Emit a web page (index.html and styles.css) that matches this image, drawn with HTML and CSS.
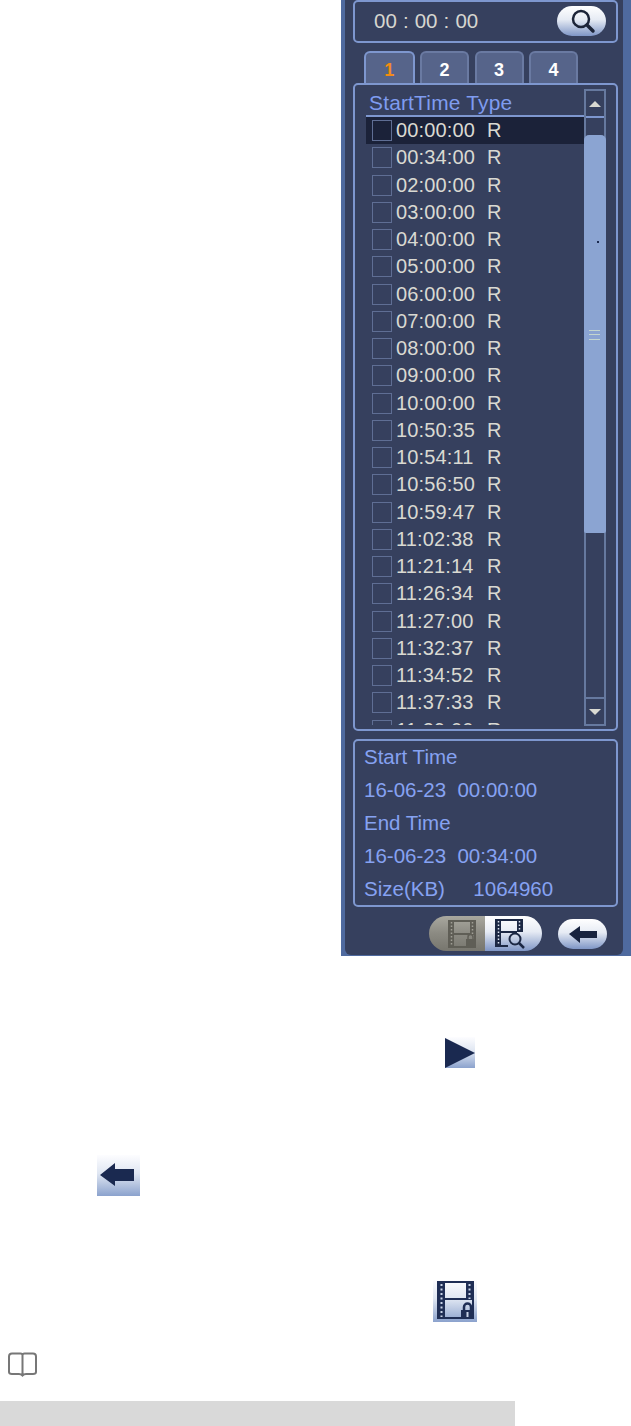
FILE: index.html
```html
<!DOCTYPE html>
<html lang="en">
<head>
<meta charset="UTF-8">
<title>Record Search</title>
<link rel="stylesheet" href="styles.css">
</head>
<body>
<div class="panel">
  <div class="panel-inner">
    <div class="time-box">
      <span class="time-value">00 : 00 : 00</span>
      <span class="pill search-btn">
        <svg width="30" height="28" viewBox="0 0 30 28"><circle cx="14" cy="12" r="8" fill="none" stroke="#1c2438" stroke-width="2.500"/><path d="M20 18l6 6" stroke="#1c2438" stroke-width="3.500" stroke-linecap="round"/></svg>
      </span>
    </div>

    <div class="tabs">
      <div class="tab active">1</div>
      <div class="tab">2</div>
      <div class="tab">3</div>
      <div class="tab">4</div>
    </div>

    <div class="list-box">
      <div class="list-main">
        <div class="list-head">StartTime Type</div>
        <div class="list-rows">
          <div class="row selected"><span class="check"></span><span class="row-time">00:00:00</span><span>R</span></div>
          <div class="row"><span class="check"></span><span class="row-time">00:34:00</span><span>R</span></div>
          <div class="row"><span class="check"></span><span class="row-time">02:00:00</span><span>R</span></div>
          <div class="row"><span class="check"></span><span class="row-time">03:00:00</span><span>R</span></div>
          <div class="row"><span class="check"></span><span class="row-time">04:00:00</span><span>R</span></div>
          <div class="row"><span class="check"></span><span class="row-time">05:00:00</span><span>R</span></div>
          <div class="row"><span class="check"></span><span class="row-time">06:00:00</span><span>R</span></div>
          <div class="row"><span class="check"></span><span class="row-time">07:00:00</span><span>R</span></div>
          <div class="row"><span class="check"></span><span class="row-time">08:00:00</span><span>R</span></div>
          <div class="row"><span class="check"></span><span class="row-time">09:00:00</span><span>R</span></div>
          <div class="row"><span class="check"></span><span class="row-time">10:00:00</span><span>R</span></div>
          <div class="row"><span class="check"></span><span class="row-time">10:50:35</span><span>R</span></div>
          <div class="row"><span class="check"></span><span class="row-time">10:54:11</span><span>R</span></div>
          <div class="row"><span class="check"></span><span class="row-time">10:56:50</span><span>R</span></div>
          <div class="row"><span class="check"></span><span class="row-time">10:59:47</span><span>R</span></div>
          <div class="row"><span class="check"></span><span class="row-time">11:02:38</span><span>R</span></div>
          <div class="row"><span class="check"></span><span class="row-time">11:21:14</span><span>R</span></div>
          <div class="row"><span class="check"></span><span class="row-time">11:26:34</span><span>R</span></div>
          <div class="row"><span class="check"></span><span class="row-time">11:27:00</span><span>R</span></div>
          <div class="row"><span class="check"></span><span class="row-time">11:32:37</span><span>R</span></div>
          <div class="row"><span class="check"></span><span class="row-time">11:34:52</span><span>R</span></div>
          <div class="row"><span class="check"></span><span class="row-time">11:37:33</span><span>R</span></div>
          <div class="row"><span class="check"></span><span class="row-time">11:39:00</span><span>R</span></div>
        </div>
      </div>
      <div class="scrollbar">
        <div class="scroll-btn up"><span class="arrow-up"></span></div>
        <div class="scroll-track">
          <div class="scroll-thumb">
            <span class="thumb-dot"></span>
            <span class="thumb-grip"></span>
          </div>
        </div>
        <div class="scroll-btn down"><span class="arrow-down"></span></div>
      </div>
    </div>

    <div class="info-box">
      <div>Start Time</div>
      <div class="pre">16-06-23  00:00:00</div>
      <div>End Time</div>
      <div class="pre">16-06-23  00:34:00</div>
      <div class="pre">Size(KB)     1064960</div>
    </div>

    <div class="actions">
      <div class="toggle">
        <span class="toggle-half off">
          <svg width="30" height="28" viewBox="0 0 30 28">
            <path d="M1 1h26v26H1z" fill="none" stroke="#5f5e56" stroke-width="2"/>
            <path d="M1 1h5v26H1zM22 1h5v14h-5zM6 13h16v2H6z" fill="#5f5e56"/>
            <path d="M3.500 2v24M24.500 2v12" stroke="#a09f96" stroke-width="1.500" stroke-dasharray="1.500 2"/>
            <rect x="18" y="19" width="9" height="8" fill="#5f5e56"/>
            <path d="M20 19v-2a2.500 2.500 0 0 1 5 0v2" fill="none" stroke="#5f5e56" stroke-width="1.500"/>
          </svg>
        </span>
        <span class="toggle-half on">
          <svg width="30" height="30" viewBox="0 0 30 30">
            <path d="M13 27H1V1h26v12" fill="none" stroke="#1c2844" stroke-width="2"/>
            <path d="M1 1h5v26H1zM22 1h5v12h-5zM6 12h16v2H6z" fill="#1c2844"/>
            <path d="M3.500 2v24M24.500 2v10" stroke="#dfe6f2" stroke-width="1.500" stroke-dasharray="1.500 2"/>
            <circle cx="20" cy="20" r="5.500" fill="none" stroke="#1c2844" stroke-width="2"/>
            <path d="M24 24l5 5" stroke="#1c2844" stroke-width="2.500"/>
          </svg>
        </span>
      </div>
      <span class="pill back-btn">
        <svg width="32" height="18" viewBox="0 0 32 18"><path d="M2 9l11-8v5h17v7H13v5z" fill="#18233f"/></svg>
      </span>
    </div>
  </div>
</div>

<div class="doc">
  <svg class="doc-icon play-icon" width="30" height="31" viewBox="0 0 30 31"><path d="M0 1l30 15L0 31z" fill="#1a2950"/></svg>
  <svg class="doc-icon back-icon" width="43" height="41" viewBox="0 0 43 41"><path d="M3 20L18 8v6h19v12H18v5z" fill="#1a2950"/></svg>
  <svg class="doc-icon film-icon" width="44" height="42" viewBox="0 0 44 42">
    <path d="M5 2h35v36H5z" fill="none" stroke="#1f2e55" stroke-width="2"/>
    <path d="M5 2h7v36H5zM33 2h7v18h-7zM12 18h21v2H12z" fill="#1f2e55"/>
    <path d="M8.500 4v33M36.500 4v15" stroke="#c9d4e8" stroke-width="2" stroke-dasharray="2 2.500"/>
    <rect x="28" y="30" width="13" height="9" fill="#1f2e55"/>
    <path d="M31 30v-3a3.500 3.500 0 0 1 7 0v3" fill="none" stroke="#1f2e55" stroke-width="2.500"/>
    <rect x="33.500" y="32" width="2" height="5" fill="#c9d4e8"/>
  </svg>
  <svg class="doc-icon book-icon" width="31" height="25" viewBox="0 0 31 25"><path d="M15.500 3q0-1.500-2-1.500H5q-3 0-3 3V20q0 2 3 2h7q2 0 3.500 1.500Q17 22 19 22h7q3 0 3-2V4.500q0-3-3-3h-8.500q-2 0-2 1.500v19" fill="none" stroke="#777" stroke-width="2"/></svg>
  <div class="note-bar"></div>
</div>
</body>
</html>
```

FILE: styles.css
```css
body {
  margin: 0;
  background-color: #fff;
  font-family: "Liberation Sans", Arial, sans-serif;
}

.panel {
  margin-left: 341px;
  width: 290px;
  height: 956px;
  background-color: #4f6a9f;
}

.panel-inner {
  box-sizing: border-box;
  width: 278px;
  height: 955px;
  margin-left: 4px;
  padding: 0 5px 0 8px;
  background-color: #36405e;
  border-radius: 0 0 6px 6px;
}

.time-box {
  box-sizing: border-box;
  height: 43px;
  padding: 0 10px 2px 19px;
  display: flex;
  justify-content: space-between;
  align-items: center;
  border: 2px solid #7e97cf;
  border-radius: 5px;
}

.time-value {
  font-size: 20.500px;
  word-spacing: 0.400px;
  color: #d6d6d0;
}

.pill {
  display: flex;
  justify-content: center;
  align-items: center;
  width: 49px;
  height: 30px;
  border-radius: 15px;
  background: linear-gradient(#fff, #e6ebf4 45%, #7f96c6);
}

.tabs {
  display: flex;
  gap: 5.500px;
  height: 32px;
  margin-top: 8px;
  padding-left: 11px;
}

.tab {
  box-sizing: border-box;
  width: 49px;
  height: 32px;
  padding-top: 7px;
  border: 2px solid #6a7aa2;
  border-bottom: none;
  border-radius: 6px 6px 0 0;
  background-color: #56648a;
  color: #fff;
  font-size: 18px;
  font-weight: bold;
  text-align: center;
}

.tab.active {
  width: 50.500px;
  border-color: #7e97cf;
  color: #f28c14;
}

.list-box {
  box-sizing: border-box;
  display: flex;
  height: 648px;
  padding: 4px 10px 4px 11px;
  border: 2px solid #7e97cf;
  border-radius: 5px;
}

.list-main {
  width: 219px;
  height: 636px;
  overflow: hidden;
}

.list-head {
  box-sizing: border-box;
  height: 28px;
  padding-left: 3px;
  border-bottom: 2px solid #7e97cf;
  color: #7f9cf0;
  font-size: 20.900px;
  letter-spacing: 0.200px;
  line-height: 28px;
}

.row {
  display: flex;
  align-items: center;
  height: 27.250px;
  padding-left: 6px;
  color: #d9d9d2;
  font-size: 20px;
}

.row.selected {
  background-color: #1b2239;
}

.check {
  box-sizing: border-box;
  width: 20px;
  height: 21px;
  margin-right: 4px;
  border: 1px solid #5f6e94;
}

.row-time {
  width: 91px;
  letter-spacing: 0.150px;
}

.scrollbar {
  box-sizing: border-box;
  width: 22px;
  height: 637px;
  display: flex;
  flex-direction: column;
  border: 2px solid #66799f;
}

.scroll-btn {
  box-sizing: border-box;
  height: 27px;
  display: flex;
  justify-content: center;
  align-items: center;
}

.scroll-btn.up {
  border-bottom: 2px solid #7e97cf;
}

.scroll-btn.down {
  border-top: 2px solid #66799f;
}

.arrow-up {
  border: 6px solid transparent;
  border-top: none;
  border-bottom-color: #d9d9d2;
}

.arrow-down {
  border: 6px solid transparent;
  border-bottom: none;
  border-top-color: #d9d9d2;
}

.scroll-track {
  flex: 1;
  padding-top: 17px;
}

.scroll-thumb {
  position: relative;
  height: 398px;
  margin: 0 -2px;
  background-color: #8ba4d2;
  border-radius: 5px 5px 2px 2px;
}

.thumb-dot {
  position: absolute;
  top: 106px;
  left: 13px;
  width: 2px;
  height: 2px;
  background-color: #1b2a50;
}

.thumb-grip {
  position: absolute;
  top: 195px;
  left: 5px;
  width: 11px;
  height: 8px;
  border-top: 1px solid #c4d6cf;
  border-bottom: 1px solid #c4d6cf;
  background: linear-gradient(transparent 3px, #c4d6cf 3px, #c4d6cf 4px, transparent 4px);
}

.info-box {
  box-sizing: border-box;
  height: 168px;
  margin-top: 8px;
  padding: 0 0 0 9px;
  border: 2px solid #7e97cf;
  border-radius: 5px;
  color: #86a2f2;
  font-size: 20.500px;
  line-height: 33px;
}

.info-box div:first-child {
  margin-top: -1px;
}

.pre {
  white-space: pre;
}

.actions {
  display: flex;
  align-items: center;
  gap: 16px;
  height: 35px;
  margin-top: 9px;
  padding-left: 76px;
}

.toggle {
  display: flex;
  width: 113px;
  height: 35px;
  border-radius: 18px;
  overflow: hidden;
}

.toggle-half {
  width: 56px;
  display: flex;
  justify-content: flex-end;
  align-items: center;
  padding-right: 7px;
  box-sizing: border-box;
  background: linear-gradient(#a9a89f, #8b8a82 50%, #77766e);
}

.toggle-half.on {
  width: 57px;
  justify-content: flex-start;
  padding-left: 10px;
  padding-right: 0;
  background: linear-gradient(#fff, #e6ebf4 45%, #7f96c6);
}

.doc {
  display: flex;
  flex-direction: column;
  align-items: flex-start;
}

.doc-icon {
  display: block;
  background: linear-gradient(#fdfdff, #dfe6f2 45%, #8ba2cd);
}

.play-icon {
  margin: 81px 0 0 445px;
}

.back-icon {
  margin: 87px 0 0 97px;
}

.film-icon {
  margin: 84px 0 0 433px;
}

.book-icon {
  margin: 30px 0 0 7px;
  background: none;
}

.note-bar {
  width: 515px;
  height: 25px;
  margin-top: 24px;
  background-color: #d9d9d9;
}
```
